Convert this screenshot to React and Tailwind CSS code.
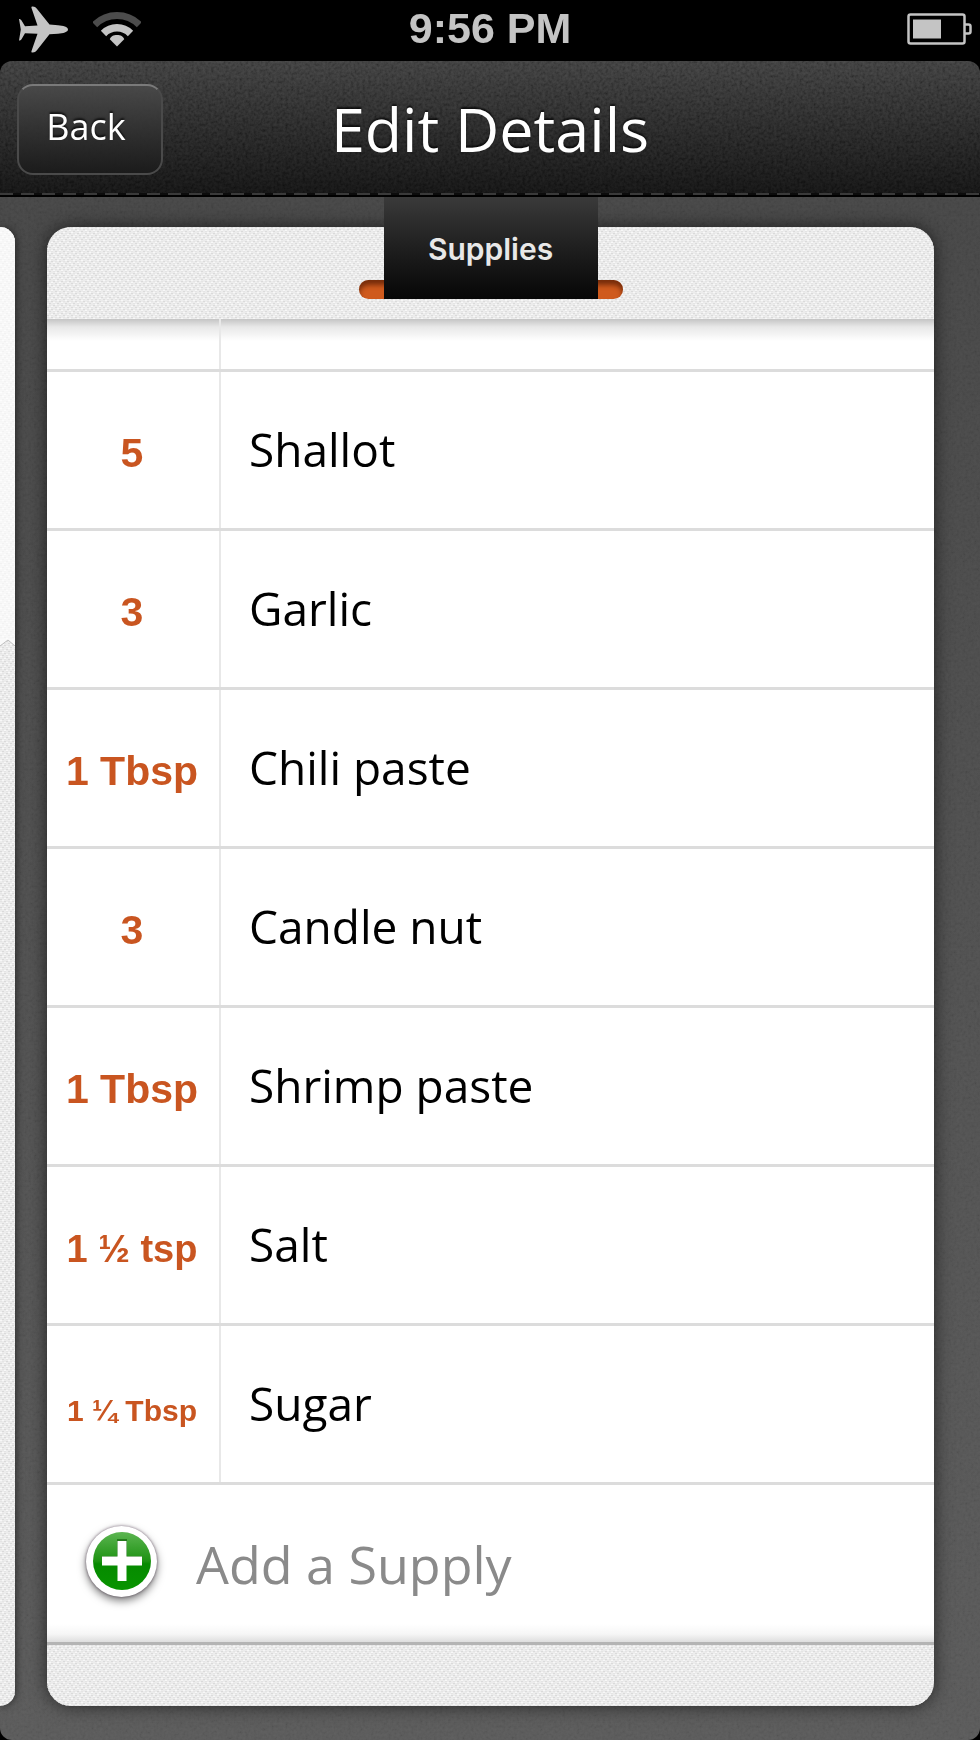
import React from "react";

const supplies = [
  { qty: "5", name: "Shallot" },
  { qty: "3", name: "Garlic" },
  { qty: "1 Tbsp", name: "Chili paste" },
  { qty: "3", name: "Candle nut" },
  { qty: "1 Tbsp", name: "Shrimp paste" },
  { qty: "1 ½ tsp", name: "Salt" },
  { qty: "1 ¼ Tbsp", name: "Sugar" },
];

// long quantities drop to a smaller size so they fit the column
function qtySize(qty) {
  if (qty.length > 7) return "text-[30px]";
  if (qty.length > 6) return "text-[38px]";
  return "text-[41px]";
}

function Grain({ id, className }) {
  return (
    <svg aria-hidden="true" className={`pointer-events-none absolute inset-0 h-full w-full ${className}`}>
      <filter id={id} x="0" y="0" width="100%" height="100%">
        <feTurbulence type="fractalNoise" baseFrequency="0.35" numOctaves="2" seed="4" />
        <feColorMatrix values="1.5 0 0 0 -0.25  1.5 0 0 0 -0.25  1.5 0 0 0 -0.25  0 0 0 0 1" />
      </filter>
      <rect width="100%" height="100%" filter={`url(#${id})`} />
    </svg>
  );
}

function Linen({ id }) {
  return (
    <svg aria-hidden="true" className="pointer-events-none absolute inset-0 h-full w-full">
      <defs>
        <pattern id={id} width="8" height="8" patternUnits="userSpaceOnUse">
          <path d="M0 0h2v1H0zM4 2h2v1H4zM2 4h2v1H2zM6 6h2v1H6z" fill="#dadada" />
          <path d="M4 0h2v1H4zM0 2h2v1H0zM6 4h2v1H6zM2 6h2v1H2z" fill="#e4e4e4" />
          <path d="M2 1h2v1H2zM6 3h2v1H6zM0 5h2v1H0zM4 7h2v1H4z" fill="#f8f8f8" />
        </pattern>
      </defs>
      <rect width="100%" height="100%" fill={`url(#${id})`} />
    </svg>
  );
}

function StatusBar() {
  return (
    <div className="grid h-[61px] grid-cols-[1fr_auto_1fr] items-center bg-black px-2 text-[#c4c4c4]">
      <div className="flex items-center gap-6 pb-1 pl-[10px]">
        <svg width="51" height="48" viewBox="18 5 51 48" fill="currentColor" aria-label="Airplane mode">
          <path d="M68 29.500c0-2.600-5-4-10-4.200L49.500 24.500 37.500 9.500C36 7.500 35 6.500 32.500 6.500 31.500 6.500 31.200 7 31.500 8L37.500 25.500 25 26.300 21.500 20.500C21 19.500 20 19 19 19L20.800 29.500 19 40.500C20 40.500 21 40 21.500 39.200L25 33.200 37.500 33.800 31.500 51C31.200 52 31.500 52.500 32.500 52.500 35 52.500 36 51.500 37.500 49.500L49.500 34.300 58 33.700C63 33.500 68 32 68 29.500Z" />
        </svg>
        <svg width="48" height="36" viewBox="1 0 48 36" fill="none" stroke="currentColor" aria-label="Wi-Fi">
          <path d="M2.700 13.700a31.500 31.500 0 0 1 44.600 0" stroke="#4c4c4c" strokeWidth="7" />
          <path d="M11.500 22.500a19 19 0 0 1 27 0" strokeWidth="7.500" />
          <path d="M25 35.500 17.800 28.300C18.500 25.500 21.500 24 25 24s6.500 1.500 7.200 4.300Z" fill="currentColor" stroke="none" />
        </svg>
      </div>
      <div className="pb-1 font-['Liberation_Sans',sans-serif] text-[43px] leading-[57px] font-bold">9:56 PM</div>
      <svg className="mb-1 justify-self-end" width="65" height="32" viewBox="0 0 65 32" fill="none" stroke="#c4c4c4" aria-label="Battery">
        <rect x="1.500" y="1.500" width="56" height="29" rx="2" strokeWidth="2.500" />
        <rect x="6" y="6.500" width="28" height="19" fill="#c4c4c4" stroke="none" />
        <path d="M58 11.500h3.500a2 2 0 0 1 2 2v5a2 2 0 0 1-2 2H58" strokeWidth="2.500" />
      </svg>
    </div>
  );
}

function Header() {
  return (
    <header className="relative flex h-[136px] flex-col overflow-hidden rounded-t-xl bg-linear-to-b from-[#3c3c3c] to-[#121212]">
      <Grain id="leather" className="opacity-25 mix-blend-soft-light" />
      <div className="relative grid flex-1 grid-cols-[1fr_auto_1fr] items-center px-[17px] pt-1 font-['Open_Sans',sans-serif] text-white">
        <button
          type="button"
          className="h-[91px] w-[146px] justify-self-start rounded-2xl border-2 border-[#4a4a4a] border-t-[#7a7a7a] bg-linear-to-b from-[#4a4a4a]/90 to-[#1b1b1b]/90 pr-2 pb-1 text-[36px] [text-shadow:0_-2px_2px_rgb(0_0_0/0.7)]"
        >
          Back
        </button>
        <h1 className="text-[61px] leading-[84px] [text-shadow:0_-2px_2px_rgb(0_0_0/0.7)]">Edit Details</h1>
      </div>
      <div className="relative h-[2px] bg-[repeating-linear-gradient(to_right,#3a3a3a_0_13px,#0c0c0c_13px_21px)]" />
      <div className="relative h-[2px] bg-black" />
    </header>
  );
}

function PreviousCard() {
  return (
    <div className="relative flex w-[15px] flex-col overflow-hidden rounded-r-[15px] bg-[#ececec] shadow-[0_0_10px_rgb(0_0_0/0.6)]">
      <Linen id="linen-prev" />
      <div className="relative h-[412px] bg-white/65" />
      <svg className="relative" width="15" height="8" viewBox="0 0 15 8" fill="none" aria-hidden="true">
        <path d="M0 0h15v7L8 1 0 7Z" fill="#fafafa" />
        <path d="M0 7 8 1l7 6" stroke="#bdbdbd" />
      </svg>
    </div>
  );
}

function SuppliesTab() {
  return (
    <div className="absolute inset-x-0 -top-[30px] flex justify-center">
      <div className="flex h-[102px] w-[264px] flex-col justify-end">
        <div className="h-[19px] rounded-full bg-[#cf5a1d] shadow-[inset_0_5px_5px_rgb(70_20_0/0.65)]" />
      </div>
      <h2 className="absolute top-0 h-[102px] w-[214px] bg-linear-to-b from-[#3a3a3a] to-[#070707] pt-[32px] text-center font-['Inter',sans-serif] text-[30px] leading-[40px] font-semibold text-[#e8e8e8]">
        Supplies
      </h2>
    </div>
  );
}

function SupplyTable() {
  return (
    <table className="w-full table-fixed border-collapse bg-[linear-gradient(to_bottom,#c4c4c4,#e8e8e8_8px,#fff_22px)]">
      <tbody>
        <tr className="h-[51px] border-b-3 border-[#dcdcdc]">
          <td className="w-[173px] border-r-2 border-r-[#e8e8e8]" />
          <td />
        </tr>
        {supplies.map(s => (
          <tr key={s.name} className="h-[159px] border-b-3 border-[#dcdcdc]">
            <td className={`border-r-2 border-r-[#e8e8e8] pr-[2px] text-center align-baseline font-['Liberation_Sans',sans-serif] font-bold whitespace-nowrap text-[#c95520] ${qtySize(s.qty)}`}>
              {s.qty}
            </td>
            <td className="pt-[45px] pl-[28px] align-baseline font-['Open_Sans',sans-serif] text-[46px] leading-[64px] text-black">
              {s.name}
            </td>
          </tr>
        ))}
      </tbody>
    </table>
  );
}

function AddSupply() {
  return (
    <button
      type="button"
      className="flex h-[160px] w-full items-center gap-[39px] border-b-3 border-[#b4b4b4] bg-[linear-gradient(to_top,#dedede,#f6f6f6_8px,#fff_18px)] pl-[39px] text-left"
    >
      <span className="mb-1 flex size-[71px] items-center justify-center rounded-full bg-white shadow-[0_4px_9px_rgb(0_0_0/0.5),0_0_3px_rgb(60_30_60/0.6)]">
        <svg width="60" height="60" viewBox="0 0 60 60" aria-hidden="true">
          <defs>
            <linearGradient id="green" x1="0" y1="0" x2="0" y2="1">
              <stop offset="0" stopColor="#5cb551" />
              <stop offset="0.5" stopColor="#1d9212" />
              <stop offset="0.55" stopColor="#068a00" />
              <stop offset="1" stopColor="#089400" />
            </linearGradient>
          </defs>
          <circle cx="30" cy="30" r="29" fill="url(#green)" />
          <path d="M25 8h10v17h15v5H10v-5h15z" fill="#0b5a05" opacity="0.6" />
          <path d="M25.500 10h9v15.500H50v9H34.500V50h-9V34.500H10v-9h15.500z" fill="#fff" />
        </svg>
      </span>
      <span className="pt-[2px] font-['Open_Sans',sans-serif] text-[52px] leading-[72px] text-[#8a8a8a]">Add a Supply</span>
    </button>
  );
}

export default function App() {
  return (
    <div className="bg-black">
      <StatusBar />
      <Header />
      <main className="relative flex overflow-hidden rounded-b-xl bg-linear-to-b from-[#464646] to-[#5a5a5a] pt-[30px] pr-[46px] pb-[34px]">
        <Grain id="felt" className="opacity-10 mix-blend-soft-light" />
        <PreviousCard />
        <section className="relative ml-8 flex-1 rounded-[24px] shadow-[0_0_18px_rgb(0_0_0/0.6)]">
          <div className="relative h-[92px] overflow-hidden rounded-t-[24px] bg-[#ececec]">
            <Linen id="linen-top" />
          </div>
          <SuppliesTab />
          <SupplyTable />
          <AddSupply />
          <div className="relative h-[61px] overflow-hidden rounded-b-[24px] bg-[#ececec]">
            <Linen id="linen-bottom" />
          </div>
        </section>
      </main>
    </div>
  );
}
